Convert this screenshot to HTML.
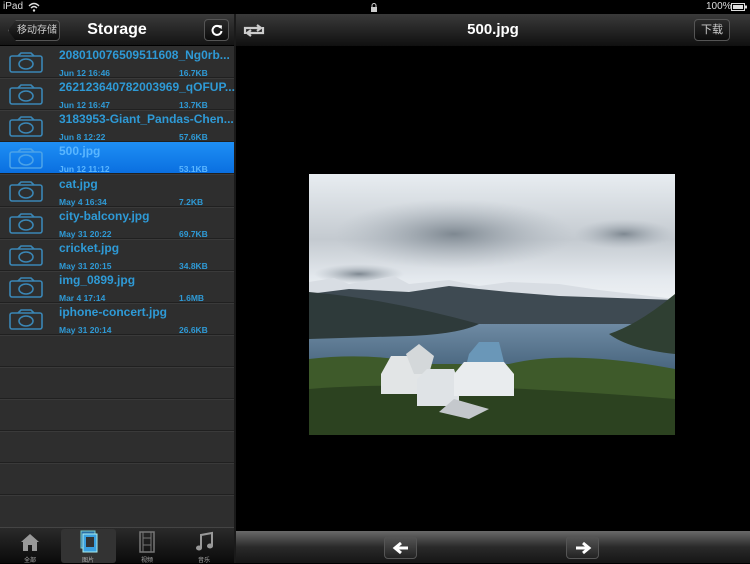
<!DOCTYPE html>
<html><head><meta charset="utf-8"><style>
*{margin:0;padding:0;box-sizing:border-box}
body{width:750px;height:563px;background:#000;position:relative;overflow:hidden;font-family:"Liberation Sans","Noto Sans CJK SC",sans-serif}
.abs{position:absolute}
.status{top:0;left:0;width:750px;height:14px;color:#ddd;font-size:10px}
.lbar{left:0;top:14px;width:234px;height:32px;background:linear-gradient(#3a3a3a,#141414);border-bottom:1px solid #000}
.rbar{left:236px;top:14px;width:514px;height:32px;background:linear-gradient(#3a3a3a,#101010)}
.btn{border:1px solid #555;border-radius:4px;background:linear-gradient(#2a2a2a,#0c0c0c);color:#ccc;font-size:10px;text-align:center}
.list{left:0;top:46px;width:234px;height:481px;background:#2e2e2e}
.row{position:absolute;left:0;width:234px;height:32px;border-bottom:1px solid #202020;box-shadow:0 1px 0 #3a3a3a}
.row .n{position:absolute;left:59px;top:2px;font-size:12px;font-weight:bold;color:#2e9ad6;white-space:nowrap}
.row .d{position:absolute;left:59px;top:22px;font-size:8.5px;font-weight:bold;color:#2e9ad6}
.row .s{position:absolute;left:179px;top:22px;font-size:8.5px;font-weight:bold;color:#2e9ad6}
.row svg{position:absolute;left:8px;top:5px}
.sel{background:linear-gradient(#1e8ff5,#0a6fe0)}
.sel .n,.sel .d,.sel .s{color:#5ab6ff}
.tab{left:0;top:527px;width:234px;height:36px;background:linear-gradient(#2a2a2a,#0a0a0a);border-top:1px solid #444}
.bbar{left:236px;top:531px;width:514px;height:32px;background:linear-gradient(#6a6a6a,#2a2a2a 50%,#151515)}
.tl{position:absolute;top:27px;font-size:6px;color:#aaa;width:30px;text-align:center}
</style></head><body>
<div class="abs status"><span class="abs" style="left:3px;top:1px">iPad</span>
<svg class="abs" style="left:28px;top:2px" width="12" height="10"><path d="M1 4 Q6 -1 11 4 M3 6 Q6 3 9 6" stroke="#ddd" fill="none" stroke-width="1.4"/><circle cx="6" cy="8.5" r="1.2" fill="#ddd"/></svg>
<svg class="abs" style="left:370px;top:2px" width="8" height="10"><path d="M2 5V3.5a2 2 0 0 1 4 0V5" stroke="#ccc" fill="none"/><rect x="1" y="5" width="6" height="5" fill="#ccc"/></svg>
<span class="abs" style="left:706px;top:1px">100%</span>
<svg class="abs" style="left:731px;top:3px" width="17" height="8"><rect x="0.5" y="0.5" width="13" height="7" fill="none" stroke="#ddd"/><rect x="2" y="2" width="10" height="4" fill="#ddd"/><rect x="14" y="2.5" width="2" height="3" fill="#ddd"/></svg>
</div>
<div class="abs lbar">
<div class="abs btn" style="left:8px;top:6px;width:52px;height:21px;line-height:19px;border-radius:3px 4px 4px 3px;clip-path:polygon(8px 0,100% 0,100% 100%,8px 100%,0 50%);padding-left:6px">移动存储</div>
<div class="abs" style="left:0;width:234px;top:7px;text-align:center;color:#fff;font-size:16px;font-weight:bold">Storage</div>
<div class="abs btn" style="left:204px;top:5px;width:25px;height:22px"><svg width="14" height="14" style="margin-top:3px"><path d="M10.5 4.5A4.5 4.5 0 1 0 11.5 8" stroke="#fff" stroke-width="2" fill="none"/><path d="M8 2l4 0.5-0.5 4z" fill="#fff"/></svg></div>
</div>
<div class="abs rbar">
<svg class="abs" style="left:6px;top:9px" width="24" height="15"><path d="M3 11V5h15M15 2l4 3-4 3" stroke="#ccc" stroke-width="2.2" fill="none"/><path d="M21 4v6H6M9 13l-4-3 4-3" stroke="#ccc" stroke-width="2.2" fill="none"/></svg>
<div class="abs" style="left:0;width:514px;top:7px;text-align:center;color:#fff;font-size:15px;font-weight:bold">500.jpg</div>
<div class="abs btn" style="left:458px;top:5px;width:36px;height:22px;line-height:20px;font-size:11px">下载</div>
</div>
<div class="abs" style="left:234px;top:14px;width:2px;height:549px;background:#1a1a1a"></div>
<div class="abs list">
<div class="row" style="top:0"><svg width="36" height="22"><rect x="2" y="5" width="32" height="16" rx="2" fill="none" stroke="#3a86b5" stroke-width="1.6"/><path d="M10 5l3-3h10l3 3" fill="none" stroke="#3a86b5" stroke-width="1.6"/><ellipse cx="18" cy="13" rx="7" ry="5" fill="none" stroke="#3a86b5" stroke-width="1.6"/></svg><span class="n">208010076509511608_Ng0rb...</span><span class="d">Jun 12 16:46</span><span class="s">16.7KB</span></div>
<div class="row" style="top:32px"><svg width="36" height="22"><rect x="2" y="5" width="32" height="16" rx="2" fill="none" stroke="#3a86b5" stroke-width="1.6"/><path d="M10 5l3-3h10l3 3" fill="none" stroke="#3a86b5" stroke-width="1.6"/><ellipse cx="18" cy="13" rx="7" ry="5" fill="none" stroke="#3a86b5" stroke-width="1.6"/></svg><span class="n">262123640782003969_qOFUP...</span><span class="d">Jun 12 16:47</span><span class="s">13.7KB</span></div>
<div class="row" style="top:64px"><svg width="36" height="22"><rect x="2" y="5" width="32" height="16" rx="2" fill="none" stroke="#3a86b5" stroke-width="1.6"/><path d="M10 5l3-3h10l3 3" fill="none" stroke="#3a86b5" stroke-width="1.6"/><ellipse cx="18" cy="13" rx="7" ry="5" fill="none" stroke="#3a86b5" stroke-width="1.6"/></svg><span class="n">3183953-Giant_Pandas-Chen...</span><span class="d">Jun 8 12:22</span><span class="s">57.6KB</span></div>
<div class="row sel" style="top:96px"><svg width="36" height="22"><rect x="2" y="5" width="32" height="16" rx="2" fill="none" stroke="#4aa2e8" stroke-width="1.6"/><path d="M10 5l3-3h10l3 3" fill="none" stroke="#4aa2e8" stroke-width="1.6"/><ellipse cx="18" cy="13" rx="7" ry="5" fill="none" stroke="#4aa2e8" stroke-width="1.6"/></svg><span class="n">500.jpg</span><span class="d">Jun 12 11:12</span><span class="s">53.1KB</span></div>
<div class="row" style="top:129px"><svg width="36" height="22"><rect x="2" y="5" width="32" height="16" rx="2" fill="none" stroke="#3a86b5" stroke-width="1.6"/><path d="M10 5l3-3h10l3 3" fill="none" stroke="#3a86b5" stroke-width="1.6"/><ellipse cx="18" cy="13" rx="7" ry="5" fill="none" stroke="#3a86b5" stroke-width="1.6"/></svg><span class="n">cat.jpg</span><span class="d">May 4 16:34</span><span class="s">7.2KB</span></div>
<div class="row" style="top:161px"><svg width="36" height="22"><rect x="2" y="5" width="32" height="16" rx="2" fill="none" stroke="#3a86b5" stroke-width="1.6"/><path d="M10 5l3-3h10l3 3" fill="none" stroke="#3a86b5" stroke-width="1.6"/><ellipse cx="18" cy="13" rx="7" ry="5" fill="none" stroke="#3a86b5" stroke-width="1.6"/></svg><span class="n">city-balcony.jpg</span><span class="d">May 31 20:22</span><span class="s">69.7KB</span></div>
<div class="row" style="top:193px"><svg width="36" height="22"><rect x="2" y="5" width="32" height="16" rx="2" fill="none" stroke="#3a86b5" stroke-width="1.6"/><path d="M10 5l3-3h10l3 3" fill="none" stroke="#3a86b5" stroke-width="1.6"/><ellipse cx="18" cy="13" rx="7" ry="5" fill="none" stroke="#3a86b5" stroke-width="1.6"/></svg><span class="n">cricket.jpg</span><span class="d">May 31 20:15</span><span class="s">34.8KB</span></div>
<div class="row" style="top:225px"><svg width="36" height="22"><rect x="2" y="5" width="32" height="16" rx="2" fill="none" stroke="#3a86b5" stroke-width="1.6"/><path d="M10 5l3-3h10l3 3" fill="none" stroke="#3a86b5" stroke-width="1.6"/><ellipse cx="18" cy="13" rx="7" ry="5" fill="none" stroke="#3a86b5" stroke-width="1.6"/></svg><span class="n">img_0899.jpg</span><span class="d">Mar 4 17:14</span><span class="s">1.6MB</span></div>
<div class="row" style="top:257px"><svg width="36" height="22"><rect x="2" y="5" width="32" height="16" rx="2" fill="none" stroke="#3a86b5" stroke-width="1.6"/><path d="M10 5l3-3h10l3 3" fill="none" stroke="#3a86b5" stroke-width="1.6"/><ellipse cx="18" cy="13" rx="7" ry="5" fill="none" stroke="#3a86b5" stroke-width="1.6"/></svg><span class="n">iphone-concert.jpg</span><span class="d">May 31 20:14</span><span class="s">26.6KB</span></div>
<div class="row" style="top:289px"></div><div class="row" style="top:321px"></div><div class="row" style="top:353px"></div><div class="row" style="top:385px"></div><div class="row" style="top:417px"></div><div class="row" style="top:449px;border:0;box-shadow:none"></div>
</div>
<div class="abs tab">
<div class="abs" style="left:61px;top:1px;width:55px;height:34px;background:#333;border-radius:3px"></div>
<svg class="abs" style="left:19px;top:3px" width="22" height="22"><path d="M2 11L11 3l9 8h-2v9h-5v-6h-4v6H4v-9z" fill="#999"/></svg>
<svg class="abs" style="left:79px;top:2px" width="20" height="24"><rect x="2" y="1" width="14" height="17" fill="#2a6fa8" stroke="#7cc" /><rect x="4" y="4" width="14" height="18" fill="#3aa0e0" stroke="#aee"/><rect x="7" y="7" width="8" height="10" fill="#333"/></svg>
<svg class="abs" style="left:139px;top:3px" width="16" height="22"><rect x="1" y="1" width="14" height="20" fill="none" stroke="#777" stroke-width="1.5"/><path d="M4 1v20M12 1v20M4 7h8M4 14h8" stroke="#777"/></svg>
<svg class="abs" style="left:195px;top:3px" width="20" height="22"><path d="M6 17V4l11-2v13" stroke="#999" stroke-width="2" fill="none"/><ellipse cx="4" cy="17" rx="3" ry="2.5" fill="#999"/><ellipse cx="15" cy="15" rx="3" ry="2.5" fill="#999"/></svg>
<span class="tl" style="left:15px">全部</span><span class="tl" style="left:73px">图片</span><span class="tl" style="left:132px">视频</span><span class="tl" style="left:189px">音乐</span>
</div>
<div class="abs bbar">
<div class="abs btn" style="left:148px;top:5px;width:33px;height:23px;background:linear-gradient(#555,#222)"><svg width="18" height="14" style="margin-top:4px"><path d="M16 7H4M9 2L3 7l6 5" stroke="#fff" stroke-width="3" fill="none"/></svg></div>
<div class="abs btn" style="left:330px;top:5px;width:33px;height:23px;background:linear-gradient(#555,#222)"><svg width="18" height="14" style="margin-top:4px"><path d="M2 7h12M9 2l6 5-6 5" stroke="#fff" stroke-width="3" fill="none"/></svg></div>
</div>
<svg class="abs" style="left:309px;top:174px" width="366" height="261" viewBox="0 0 366 261">
<defs><linearGradient id="sk" x1="0" y1="0" x2="0" y2="1"><stop offset="0" stop-color="#e8edf1"/><stop offset=".25" stop-color="#c4cad0"/><stop offset=".4" stop-color="#e4e9ee"/><stop offset=".5" stop-color="#f0f3f5"/><stop offset="1" stop-color="#dfe6ec"/></linearGradient>
<linearGradient id="wa" x1="0" y1="0" x2="0" y2="1"><stop offset="0" stop-color="#6e8aa3"/><stop offset="1" stop-color="#45627b"/></linearGradient>
<radialGradient id="cl"><stop offset="0" stop-color="#7e8891"/><stop offset="1" stop-color="#aeb6be" stop-opacity="0"/></radialGradient></defs>
<rect width="366" height="261" fill="url(#sk)"/>
<ellipse cx="145" cy="60" rx="120" ry="35" fill="url(#cl)"/>
<ellipse cx="315" cy="60" rx="50" ry="15" fill="url(#cl)"/>
<ellipse cx="50" cy="100" rx="45" ry="10" fill="url(#cl)"/>
<path d="M0 108 L25 104 L40 110 L85 102 L100 110 L140 106 L170 112 L200 108 L250 110 L290 116 L366 125 V140 H0Z" fill="#d8dde3"/>
<path d="M0 120 L40 115 L100 118 L140 112 L200 118 L250 122 L366 126 V150 H0Z" fill="#3e4a52"/>
<rect x="0" y="150" width="366" height="50" fill="url(#wa)"/>
<path d="M0 118 Q80 125 170 150 Q150 160 100 162 L0 165Z" fill="#2e3a3a"/>
<path d="M366 120 Q330 150 300 160 Q320 175 366 180Z" fill="#2f3f32"/>
<path d="M0 185 Q60 178 120 190 L200 190 Q260 175 366 195 V261 H0Z" fill="#3e5a2a"/>
<path d="M0 215 Q120 205 366 225 V261 H0Z" fill="#2c4220"/>
<path d="M72 200 L82 182 L110 182 L120 200 V220 L72 220Z" fill="#e2e5e6"/>
<path d="M97 180 L110 170 L125 182 L120 200 H105Z" fill="#d4d8da"/>
<path d="M108 205 L118 195 L145 195 L150 210 V232 L108 232Z" fill="#dfe3e6"/>
<path d="M145 200 L155 188 L195 188 L205 200 V222 L145 222Z" fill="#e9ecee"/>
<path d="M160 180 L170 168 L190 168 L195 188 L158 188Z" fill="#6a97b8"/>
<path d="M145 225 L180 235 L160 245 L130 238Z" fill="#c4c8cc"/>
</svg>
</body></html>
